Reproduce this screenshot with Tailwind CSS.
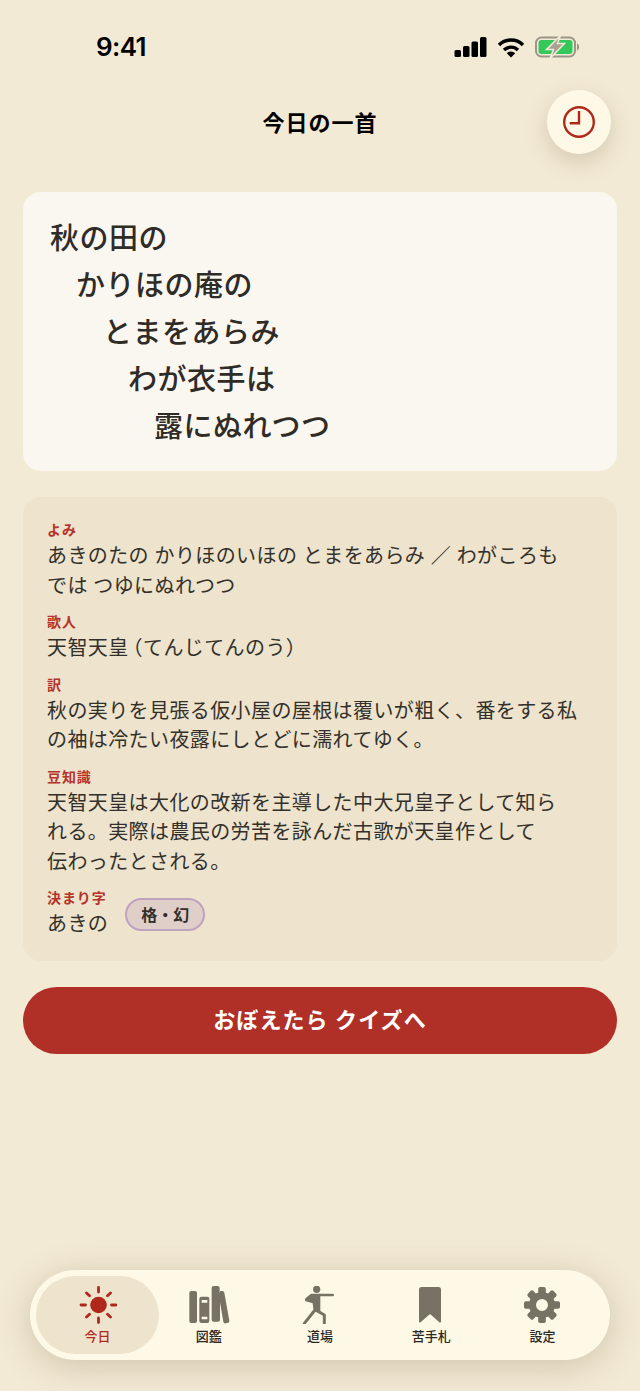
<!DOCTYPE html>
<html lang="ja"><head><meta charset="utf-8">
<script src="https://cdn.jsdelivr.net/npm/@tailwindcss/browser@4"></script>
</head>
<body class="m-0">
<div class="relative w-[640px] h-[1391px] overflow-hidden bg-[#f3ead6] text-[#33302b] flex flex-col font-['Inter','Noto_Sans_CJK_JP',sans-serif]">
  <!-- status -->
  <div class="h-[90px] shrink-0 flex items-start justify-between pt-[32px] pl-[96px] pr-[59px]">
    <span class="text-[26px] leading-[30px] font-semibold tracking-[-0.6px] text-black font-['Inter',sans-serif]">9:41</span>
    <div class="flex items-center gap-[10px] h-[30px]">
      <svg width="33" height="21" viewBox="0 0 33 21" fill="#000"><rect x="0.500" y="13" width="6.500" height="7" rx="1.500"/><rect x="9" y="9" width="6.500" height="11" rx="1.500"/><rect x="17.500" y="4.500" width="6.500" height="15.500" rx="1.500"/><rect x="26" y="0" width="6.500" height="20" rx="1.500"/></svg>
      <svg width="28" height="21" viewBox="0 0 28 21" fill="none" stroke="#000" stroke-width="3.400"><path d="M2 8a17 17 0 0 1 24 0"/><path d="M7 13a10 10 0 0 1 14 0"/><path d="M14 20.500l-4.200-4.200a5.800 5.800 0 0 1 8.400 0z" fill="#000" stroke="none"/></svg>
      <svg width="46" height="22" viewBox="0 0 46 22"><rect x="1" y="1.500" width="39" height="19" rx="5.500" fill="none" stroke="#9b9588" stroke-width="2"/><rect x="3.500" y="4" width="34" height="14" rx="3" fill="#34c759"/><path d="M42 7.500c2.800.5 2.800 6.500 0 7z" fill="#9b9588"/><path d="M25.500 -0.500L11.500 13.500h7l-3.500 9 14.500-15h-7z" fill="#a8a294" stroke="#f3ead6" stroke-width="1.500"/></svg>
    </div>
  </div>
  <!-- header -->
  <div class="relative h-[64px] shrink-0 flex items-center justify-center">
    <h1 class="text-[22px] leading-[30px] font-semibold tracking-[1px] text-black mt-[2px]">今日の一首</h1>
    <button class="absolute right-[29px] top-0 w-[64px] h-[64px] rounded-full bg-[#fef9e7] shadow-[0_8px_24px_rgba(90,70,30,0.2)] flex items-center justify-center">
      <svg width="34" height="34" viewBox="0 0 34 34" fill="none" stroke="#b0281a" stroke-width="2.400" stroke-linejoin="miter"><circle cx="17" cy="17" r="14.800"/><path d="M17 6V18.300H7.700"/></svg>
    </button>
  </div>
  <main class="flex flex-col px-[23px] pt-[38px]">
    <section class="h-[279px] rounded-[18px] bg-[#faf7f0] pt-[23px] pl-[27px] text-[29px] leading-[47px] font-medium tracking-[0.5px] text-[#2f2b26]">
      <p>秋の田の</p>
      <p class="pl-[26px]">かりほの庵の</p>
      <p class="pl-[53px]">とまをあらみ</p>
      <p class="pl-[78px]">わが衣手は</p>
      <p class="pl-[104px]">露にぬれつつ</p>
    </section>
    <section class="mt-[26px] h-[464px] rounded-[18px] bg-[#eee3cc] pt-[25px] pl-[24px] pr-[30px] text-[20px] leading-[29.5px] tracking-[0.4px] [word-spacing:-0.5px]">
      <h2 class="text-[14px] leading-[16px] font-semibold tracking-[0.9px] text-[#b5322a]">よみ</h2>
      <p class="mt-[4px]">あきのたの かりほのいほの とまをあらみ ／ わがころも<br>では つゆにぬれつつ</p>
      <h2 class="mt-[13px] text-[14px] leading-[16px] font-semibold tracking-[0.9px] text-[#b5322a]">歌人</h2>
      <p class="mt-[4px]">天智天皇<span class="ml-[4px] [font-feature-settings:'halt']">（</span>てんじてんのう）</p>
      <h2 class="mt-[13px] text-[14px] leading-[16px] font-semibold tracking-[0.9px] text-[#b5322a]">訳</h2>
      <p class="mt-[4px]">秋の実りを見張る仮小屋の屋根は覆いが粗く、番をする私<br>の袖は冷たい夜露にしとどに濡れてゆく。</p>
      <h2 class="mt-[13px] text-[14px] leading-[16px] font-semibold tracking-[0.9px] text-[#b5322a]">豆知識</h2>
      <p class="mt-[4px]">天智天皇は大化の改新を主導した中大兄皇子として知ら<br>れる。実際は農民の労苦を詠んだ古歌が天皇作として<br>伝わったとされる。</p>
      <div class="mt-[13px] flex items-center gap-[17px]">
        <div>
          <h2 class="text-[14px] leading-[16px] font-semibold tracking-[0.9px] text-[#b5322a]">決まり字</h2>
          <p class="mt-[4px]">あきの</p>
        </div>
        <span class="w-[80px] h-[33px] rounded-full border-2 border-[#bfa2c0] bg-[#e0cfc9] flex items-center justify-center text-[16px] leading-none font-semibold tracking-normal">格・幻</span>
      </div>
    </section>
    <button class="mt-[26px] h-[67px] rounded-full bg-[#b03028] text-white text-[22px] font-bold tracking-[1.1px]">おぼえたら クイズへ</button>
  </main>
  <!-- tab bar -->
  <nav class="absolute left-[30px] top-[1270px] w-[580px] h-[90px] rounded-[45px] bg-[#fef9e7] shadow-[0_6px_36px_rgba(80,60,20,0.22)] py-[6px] px-[12px] grid grid-cols-5 text-[#2b2722]">
    <a class="-mx-[6px] rounded-[39px] bg-[#eee3cc] flex flex-col items-center pt-[10px] text-[#b0281a]">
      <svg width="38" height="38" viewBox="0 0 38 38" stroke="currentColor" stroke-width="2.800" stroke-linecap="round"><circle cx="19.500" cy="19" r="8.300" fill="currentColor" stroke="none"/><path d="M19.500 1.500v4.500M19.500 32v4.500M2 19h4.500M32.500 19H37M7.500 7l3 2.800M28.500 28.200l3 2.800M31.500 7l-3 2.800M10.500 28.200l-3 2.800" fill="none"/></svg>
      <span class="text-[13px] leading-[16px] font-medium mt-[4px]">今日</span>
    </a>
    <a class="flex flex-col items-center pt-[10px]">
      <svg width="60" height="38" viewBox="-3 18 180 114" fill="#787264"><rect x="28" y="33" width="23" height="96" rx="6"/><path fill-rule="evenodd" d="M64 50h18a6 6 0 0 1 6 6v67a6 6 0 0 1-6 6H64a6 6 0 0 1-6-6V56a6 6 0 0 1 6-6zM65 60v8h17v-8zM65 110v8h17v-8z"/><path d="M101 18h12a6 6 0 0 1 6 6v15l2-6h6a6 6 0 0 1 6 5l15 84a6 6 0 0 1-5 7l-6 1a6 6 0 0 1-7-5l-10-58v52a6 6 0 0 1-6 6h-13a6 6 0 0 1-6-6V24a6 6 0 0 1 6-6z"/></svg>
      <span class="text-[13px] leading-[16px] font-medium mt-[4px]">図鑑</span>
    </a>
    <a class="flex flex-col items-center pt-[10px]">
      <svg width="50" height="38" viewBox="0 18 150 114" fill="#787264"><circle cx="65" cy="28" r="11"/><path d="M48 41h65a4 4 0 0 1 0 8H76v46H56l-3-25-23-7 1-8z"/><path d="M60 90l-32 40" stroke="#787264" stroke-width="9" stroke-linecap="round" fill="none"/><path d="M66 92l22 13v25" stroke="#787264" stroke-width="9" stroke-linecap="round" stroke-linejoin="round" fill="none"/></svg>
      <span class="text-[13px] leading-[16px] font-medium mt-[4px]">道場</span>
    </a>
    <a class="flex flex-col items-center pt-[10px]">
      <svg width="24" height="38" viewBox="0 0 24 38" fill="#787264" class="-translate-x-px"><path d="M1 3.500A2.500 2.500 0 0 1 3.500 1h17A2.500 2.500 0 0 1 23 3.500V35.500a1 1 0 0 1-1.600.8L12 28l-9.400 8.300A1 1 0 0 1 1 35.500z"/></svg>
      <span class="text-[13px] leading-[16px] font-medium mt-[4px]">苦手札</span>
    </a>
    <a class="flex flex-col items-center pt-[10px]">
      <svg width="38" height="38" viewBox="-19 -19 38 38" fill="#787264"><circle r="9.500" fill="none" stroke="#787264" stroke-width="7"/><rect x="-3.800" y="-18" width="7.600" height="7" rx="1.800"/><rect x="-3.800" y="-18" width="7.600" height="7" rx="1.800" transform="rotate(45)"/><rect x="-3.800" y="-18" width="7.600" height="7" rx="1.800" transform="rotate(90)"/><rect x="-3.800" y="-18" width="7.600" height="7" rx="1.800" transform="rotate(135)"/><rect x="-3.800" y="-18" width="7.600" height="7" rx="1.800" transform="rotate(180)"/><rect x="-3.800" y="-18" width="7.600" height="7" rx="1.800" transform="rotate(225)"/><rect x="-3.800" y="-18" width="7.600" height="7" rx="1.800" transform="rotate(270)"/><rect x="-3.800" y="-18" width="7.600" height="7" rx="1.800" transform="rotate(315)"/></svg>
      <span class="text-[13px] leading-[16px] font-medium mt-[4px]">設定</span>
    </a>
  </nav>
</div>
</body></html>
